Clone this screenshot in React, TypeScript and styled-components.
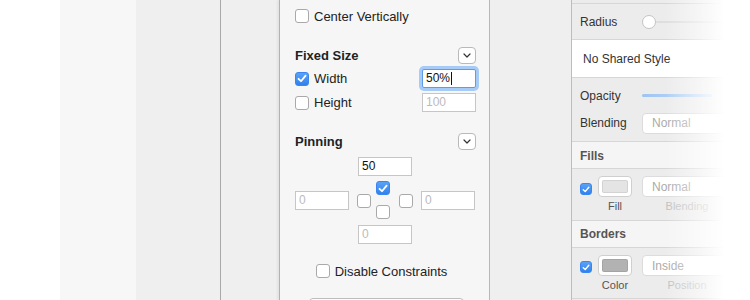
import styled, { createGlobalStyle } from 'styled-components';

const GlobalStyle = createGlobalStyle`
    html, body {
        margin: 0;
        padding: 0;
        background: #ffffff;
    }
    body {
        font-family: "Liberation Sans", Arial, sans-serif;
        color: #222;
    }
`;

const Page = styled.div`
    position: relative;
    display: flex;
    width: 750px;
    height: 300px;
    overflow: hidden;
`;

const Column = styled.div<{ $w: number; $bg: string; $line?: boolean }>`
    flex: 0 0 ${(p) => p.$w}px;
    width: ${(p) => p.$w}px;
    box-sizing: border-box;
    background: ${(p) => p.$bg};
    border-right: ${(p) => (p.$line ? '1px solid #a9a9a9' : 'none')};
`;

const Popover = styled.div`
    flex: 0 0 211px;
    box-sizing: border-box;
    background: #f6f6f6;
    border-left: 1px solid #b2b2b2;
    border-right: 1px solid #b8b8b8;
    box-shadow: -2px 0 2px rgba(0, 0, 0, 0.05);
    padding: 9px 13px 0 15px;
    display: flex;
    flex-direction: column;
`;

const Row = styled.label<{ $h?: number; $center?: boolean }>`
    display: flex;
    align-items: center;
    justify-content: ${(p) => (p.$center ? 'center' : 'flex-start')};
    height: ${(p) => p.$h ?? 14}px;
    font-size: 13px;
    color: #222;
    gap: 5px;
`;

const Box = styled.span<{ $on?: boolean; $size: number }>`
    flex: 0 0 auto;
    display: inline-flex;
    align-items: center;
    justify-content: center;
    width: ${(p) => p.$size}px;
    height: ${(p) => p.$size}px;
    box-sizing: border-box;
    border-radius: 3px;
    border: 1px solid ${(p) => (p.$on ? '#3a86ee' : '#a9a9a9')};
    background: ${(p) => (p.$on ? 'linear-gradient(#5aa2f7, #2f82ee)' : '#ffffff')};
`;

const SectionHead = styled.div<{ $top: number }>`
    display: flex;
    align-items: center;
    justify-content: space-between;
    height: 18px;
    margin-top: ${(p) => p.$top}px;
    font-size: 13px;
    font-weight: bold;
    color: #222;
`;

const Disclosure = styled.span`
    display: inline-flex;
    align-items: center;
    justify-content: center;
    width: 18px;
    height: 17px;
    box-sizing: border-box;
    background: #fff;
    border: 1px solid #b9b9b9;
    border-radius: 4px;
`;

const FieldRow = styled.div<{ $top: number }>`
    display: flex;
    align-items: center;
    justify-content: space-between;
    height: 19px;
    margin-top: ${(p) => p.$top}px;
`;

const Field = styled.div<{ $focus?: boolean; $muted?: boolean }>`
    width: 54px;
    height: 19px;
    box-sizing: border-box;
    background: #fff;
    border: 1px solid ${(p) => (p.$focus ? '#5f9ce6' : '#c6c6c6')};
    box-shadow: ${(p) => (p.$focus ? '0 0 0 3px #a6cbf6' : 'none')};
    border-radius: ${(p) => (p.$focus ? '2px' : '0')};
    padding-left: 3px;
    font-size: 12px;
    line-height: 17px;
    color: ${(p) => (p.$muted ? '#bbbbbb' : '#111')};
    display: flex;
    align-items: center;
`;

const Caret = styled.span`
    display: inline-block;
    width: 1px;
    height: 13px;
    background: #111;
    margin-left: 1px;
`;

const PinGrid = styled.div`
    display: grid;
    grid-template-columns: 54px 8px 14px 5px 14px 9px 14px 8px 54px;
    grid-template-rows: 19px 5px 10px 4px 10px 5px 9px 6px 19px;
    margin-top: 7px;
`;

const Cell = styled.div<{ $col: string; $row: string }>`
    grid-column: ${(p) => p.$col};
    grid-row: ${(p) => p.$row};
    display: flex;
    align-items: center;
    justify-content: center;
`;

const ConstraintRow = styled(Row)`
    margin-top: 20px;
    padding-right: 8px;
`;

const BottomButton = styled.div`
    flex: 0 0 auto;
    margin: 20px 12px 0 14px;
    height: 20px;
    background: #fff;
    border: 1px solid #bdbdbd;
    border-radius: 4px;
`;

const Inspector = styled.div`
    flex: 1 1 auto;
    box-sizing: border-box;
    border-left: 1px solid #bdbdbd;
    background: #ececec;
    display: flex;
    flex-direction: column;
`;

const InsRow = styled.div<{ $h: number; $bg?: string; $align?: string; $pad?: number }>`
    height: ${(p) => p.$h}px;
    box-sizing: border-box;
    flex: 0 0 auto;
    border-bottom: 1px solid #d6d6d6;
    background: ${(p) => p.$bg ?? '#ececec'};
    display: flex;
    align-items: ${(p) => p.$align ?? 'center'};
    padding-left: ${(p) => p.$pad ?? 8}px;
    font-size: 12px;
    color: #333;
`;

const Label = styled.span`
    width: 62px;
    flex: 0 0 62px;
`;

const PropRow = styled.div`
    display: flex;
    align-items: center;
    height: 28px;
`;

const Knob = styled.span`
    width: 14px;
    height: 14px;
    box-sizing: border-box;
    border-radius: 50%;
    background: #fff;
    border: 1px solid #c4c4c4;
`;

const Track = styled.span<{ $blue?: boolean }>`
    display: block;
    height: ${(p) => (p.$blue ? 3 : 2)}px;
    width: 70px;
    border-radius: 2px;
    background: ${(p) => (p.$blue ? 'linear-gradient(to right, #9ec4f3, #c8ddf7)' : '#dedede')};
`;

const Stack = styled.div`
    display: flex;
    flex-direction: column;
    padding: 4px 0;
`;

const Select = styled.span`
    display: inline-flex;
    align-items: center;
    width: 90px;
    height: 21px;
    box-sizing: border-box;
    background: #fff;
    border: 1px solid #dcdcdc;
    border-radius: 4px;
    padding-left: 9px;
    font-size: 12px;
    color: #aaa;
`;

const Swatch = styled.span<{ $fill: string }>`
    display: inline-flex;
    align-items: center;
    justify-content: center;
    width: 34px;
    height: 21px;
    box-sizing: border-box;
    background: #fff;
    border: 1px solid #cfcfcf;
    border-radius: 4px;
    &::after {
        content: '';
        width: 26px;
        height: 13px;
        border-radius: 2px;
        background: ${(p) => p.$fill};
        border: 1px solid rgba(0, 0, 0, 0.08);
        box-sizing: border-box;
    }
`;

const Control = styled.div<{ $top?: number; $left?: number }>`
    display: flex;
    flex-direction: column;
    align-items: center;
    gap: 3px;
    padding-top: ${(p) => p.$top ?? 0}px;
    margin-left: ${(p) => p.$left ?? 0}px;
`;

const Caption = styled.span<{ $muted?: boolean }>`
    font-size: 11px;
    color: ${(p) => (p.$muted ? '#c0c0c0' : '#555')};
`;

const ColorRow = styled.div`
    display: flex;
    align-items: flex-start;
    gap: 10px;
    padding-top: 7px;
`;

const Head = styled.span`
    font-weight: bold;
    color: #555;
    font-size: 12px;
`;

const Fade = styled.div`
    position: absolute;
    top: 0;
    right: 0;
    width: 85px;
    height: 100%;
    background: linear-gradient(to right, rgba(255, 255, 255, 0) 0%, rgba(255, 255, 255, 0.5) 38%, #fff 70%);
    pointer-events: none;
`;

const Tick = ({ size }: { size: number }) => (
	<svg width={size - 4} height={size - 5} viewBox="0 0 10 9">
		<path d="M1.5 4.8 L4 7.2 L8.6 1.6" fill="none" stroke="#fff" strokeWidth="1.8" strokeLinecap="round" strokeLinejoin="round" />
	</svg>
);

const Check = ({ on, size = 14 }: { on?: boolean; size?: number }) => (
	<Box $on={on} $size={size}>
		{on && <Tick size={size} />}
	</Box>
);

const Chevron = () => (
	<svg width="8" height="5" viewBox="0 0 8 5">
		<path d="M1 1 L4 4 L7 1" fill="none" stroke="#333" strokeWidth="1.2" strokeLinecap="round" strokeLinejoin="round" />
	</svg>
);

const App = () => {
	return (
		<>
			<GlobalStyle />
			<Page>
				<Column $w={60} $bg="#ffffff" />
				<Column $w={76} $bg="#f7f7f7" />
				<Column $w={85} $bg="#efefef" $line />
				<Column $w={58} $bg="#efefef" />
				<Popover>
					<Row>
						<Check />
						Center Vertically
					</Row>
					<SectionHead $top={24}>
						Fixed Size
						<Disclosure>
							<Chevron />
						</Disclosure>
					</SectionHead>
					<FieldRow $top={5}>
						<Row>
							<Check on />
							Width
						</Row>
						<Field $focus>
							50%
							<Caret />
						</Field>
					</FieldRow>
					<FieldRow $top={5}>
						<Row>
							<Check />
							Height
						</Row>
						<Field $muted>100</Field>
					</FieldRow>
					<SectionHead $top={21}>
						Pinning
						<Disclosure>
							<Chevron />
						</Disclosure>
					</SectionHead>
					<PinGrid>
						<Cell $col="3 / 8" $row="1">
							<Field>50</Field>
						</Cell>
						<Cell $col="5" $row="3 / 5">
							<Check on />
						</Cell>
						<Cell $col="1" $row="4 / 7">
							<Field $muted>0</Field>
						</Cell>
						<Cell $col="3" $row="4 / 7">
							<Check />
						</Cell>
						<Cell $col="7" $row="4 / 7">
							<Check />
						</Cell>
						<Cell $col="9" $row="4 / 7">
							<Field $muted>0</Field>
						</Cell>
						<Cell $col="5" $row="6 / 8">
							<Check />
						</Cell>
						<Cell $col="3 / 8" $row="9">
							<Field $muted>0</Field>
						</Cell>
					</PinGrid>
					<ConstraintRow $center>
						<Check />
						Disable Constraints
					</ConstraintRow>
					<BottomButton />
				</Popover>
				<Column $w={81} $bg="#efefef" />
				<Inspector>
					<InsRow $h={4} />
					<InsRow $h={36} $align="center" style={{ paddingTop: 1 }}>
						<Label>Radius</Label>
						<Knob />
						<Track />
					</InsRow>
					<InsRow $h={38} $bg="#ffffff" $pad={11}>
						No Shared Style
					</InsRow>
					<InsRow $h={64} $align="stretch">
						<Stack>
							<PropRow>
								<Label>Opacity</Label>
								<Track $blue />
							</PropRow>
							<PropRow>
								<Label>Blending</Label>
								<Select>Normal</Select>
							</PropRow>
						</Stack>
					</InsRow>
					<InsRow $h={27} $bg="#f5f5f5" style={{ paddingTop: 2 }}>
						<Head>Fills</Head>
					</InsRow>
					<InsRow $h={52} $align="flex-start">
						<ColorRow>
							<Control $top={7}>
								<Check on size={12} />
							</Control>
							<Control $left={-4}>
								<Swatch $fill="#e4e4e4" />
								<Caption>Fill</Caption>
							</Control>
							<Control>
								<Select>Normal</Select>
								<Caption $muted>Blending</Caption>
							</Control>
						</ColorRow>
					</InsRow>
					<InsRow $h={27} $bg="#f5f5f5">
						<Head>Borders</Head>
					</InsRow>
					<InsRow $h={51} $align="flex-start">
						<ColorRow>
							<Control $top={6}>
								<Check on size={12} />
							</Control>
							<Control $left={-4}>
								<Swatch $fill="#b2b2b2" />
								<Caption>Color</Caption>
							</Control>
							<Control>
								<Select>Inside</Select>
								<Caption $muted>Position</Caption>
							</Control>
						</ColorRow>
					</InsRow>
				</Inspector>
				<Fade />
			</Page>
		</>
	);
};

export default App;
